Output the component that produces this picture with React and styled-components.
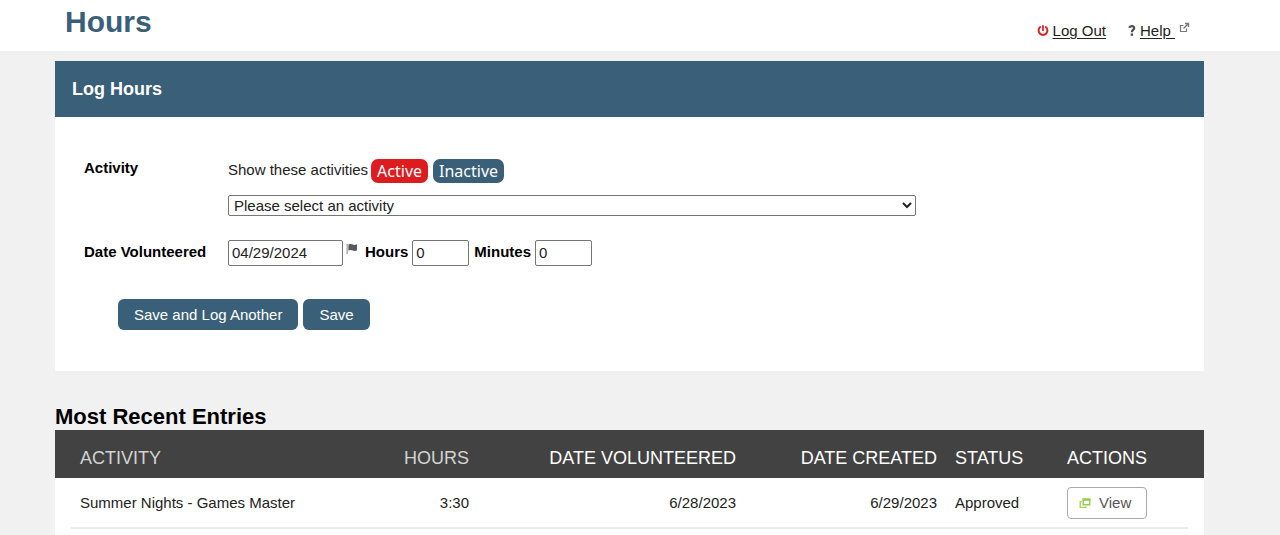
import React, { useState } from "react";
import styled, { createGlobalStyle } from "styled-components";

const entries = [
  {
    activity: "Summer Nights - Games Master",
    hours: "3:30",
    volunteered: "6/28/2023",
    created: "6/29/2023",
    status: "Approved",
  },
];

const PowerIcon = () => (
  <svg width="12" height="12" viewBox="0 0 12 12" fill="none" aria-hidden="true">
    <path
      d="M3.2 2.1A4.4 4.4 0 1 0 8.8 2.1"
      stroke="#dd2222"
      strokeWidth="2"
      strokeLinecap="round"
    />
    <path d="M6 0.9v4.4" stroke="#dd2222" strokeWidth="1.8" strokeLinecap="round" />
  </svg>
);

const QuestionIcon = () => (
  <svg width="8" height="12" viewBox="0 0 8 12" fill="none" aria-hidden="true">
    <path
      d="M1.2 2.8C1.8 0.5 6.4 0.5 6.2 3.1C6 4.9 3.9 4.9 3.9 7.2"
      stroke="#4d4d55"
      strokeWidth="2.2"
    />
    <rect x="2.7" y="8.4" width="2.4" height="2.4" fill="#4d4d55" />
  </svg>
);

const ExternalIcon = () => (
  <svg width="11" height="11" viewBox="0 0 11 11" fill="none" aria-hidden="true">
    <path d="M4.5 3.5H1.5V9.5H7.5V6.5" stroke="#77777c" strokeWidth="1.2" />
    <path d="M6 1.5H9.5V5M9.4 1.6L4.5 6.5" stroke="#77777c" strokeWidth="1.4" />
  </svg>
);

const FlagIcon = () => (
  <svg width="12" height="12" viewBox="0 0 12 12" aria-hidden="true">
    <path d="M0.5 0H1.8V10H0.5Z" fill="#a4a4a8" />
    <path
      d="M2.4 0.6C4.2 -0.4 5.6 0 6.8 0.6C8.2 1.3 9.6 1 11 0.3V6.2C9.6 7 8.2 7.2 6.8 6.5C5.6 5.9 4.2 5.7 2.4 6.6Z"
      fill="#58585e"
    />
  </svg>
);

const WindowsIcon = () => (
  <svg width="12" height="12" viewBox="0 0 12 12" fill="none" aria-hidden="true">
    <path d="M3 4.6H1.2V10.4H7V9.2" stroke="#a2d45e" strokeWidth="1.3" />
    <path d="M4.2 2.2H10.7V7.8H4.2Z" stroke="#95cc4b" strokeWidth="1.4" />
    <path d="M3.5 1.5H11.4V3.8H3.5Z" fill="#95cc4b" />
  </svg>
);

export default function App() {
  const [filter, setFilter] = useState("active");
  const [date, setDate] = useState("04/29/2024");
  const [hours, setHours] = useState("0");
  const [minutes, setMinutes] = useState("0");

  return (
    <>
      <GlobalStyle />
      <Header>
        <PageTitle>Hours</PageTitle>
        <HeaderLinks>
          <HeaderItem>
            <PowerIcon />
            <HeaderLink href="#logout">Log Out</HeaderLink>
          </HeaderItem>
          <HeaderItem>
            <QuestionIcon />
            <HeaderLink href="#help">Help&nbsp;</HeaderLink>
            <RaisedIcon>
              <ExternalIcon />
            </RaisedIcon>
          </HeaderItem>
        </HeaderLinks>
      </Header>

      <Main>
        <Panel>
          <PanelHeading>Log Hours</PanelHeading>
          <Form onSubmit={(e) => e.preventDefault()}>
            <FormRow>
              <FieldLabel htmlFor="activity">Activity</FieldLabel>
              <ActivityFields>
                <FilterRow>
                  <FilterText>Show these activities</FilterText>
                  <FilterButton
                    type="button"
                    $selected={filter === "active"}
                    onClick={() => setFilter("active")}
                  >
                    Active
                  </FilterButton>
                  <FilterButton
                    type="button"
                    $selected={filter === "inactive"}
                    onClick={() => setFilter("inactive")}
                  >
                    Inactive
                  </FilterButton>
                </FilterRow>
                <ActivitySelect id="activity">
                  <option>Please select an activity</option>
                </ActivitySelect>
              </ActivityFields>
            </FormRow>

            <FormRow>
              <FieldLabel $tall htmlFor="date">
                Date Volunteered
              </FieldLabel>
              <TimeFields>
                <DateField>
                  <TextInput
                    id="date"
                    $width={115}
                    value={date}
                    onChange={(e) => setDate(e.target.value)}
                  />
                  <FlagIcon />
                </DateField>
                <InlineField>
                  <FieldLabel $tall htmlFor="hours">
                    Hours
                  </FieldLabel>
                  <TextInput
                    id="hours"
                    $width={57}
                    value={hours}
                    onChange={(e) => setHours(e.target.value)}
                  />
                </InlineField>
                <InlineField>
                  <FieldLabel $tall htmlFor="minutes">
                    Minutes
                  </FieldLabel>
                  <TextInput
                    id="minutes"
                    $width={57}
                    value={minutes}
                    onChange={(e) => setMinutes(e.target.value)}
                  />
                </InlineField>
              </TimeFields>
            </FormRow>

            <ButtonRow>
              <SaveButton type="submit">Save and Log Another</SaveButton>
              <SaveButton type="submit">Save</SaveButton>
            </ButtonRow>
          </Form>
        </Panel>

        <SectionTitle>Most Recent Entries</SectionTitle>
        <TablePanel>
          <Table>
            <colgroup>
              <col />
              <Col $width={94} />
              <Col $width={267} />
              <Col $width={201} />
              <Col $width={112} />
              <Col $width={130} />
            </colgroup>
            <TableHead>
              <tr>
                <HeadCell $muted>ACTIVITY</HeadCell>
                <HeadCell $muted $right>
                  HOURS
                </HeadCell>
                <HeadCell $right>DATE VOLUNTEERED</HeadCell>
                <HeadCell $right>DATE CREATED</HeadCell>
                <HeadCell>STATUS</HeadCell>
                <HeadCell>ACTIONS</HeadCell>
              </tr>
            </TableHead>
            <tbody>
              {entries.map((entry) => (
                <tr key={entry.activity}>
                  <Cell>{entry.activity}</Cell>
                  <Cell $right>{entry.hours}</Cell>
                  <Cell $right>{entry.volunteered}</Cell>
                  <Cell $right>{entry.created}</Cell>
                  <Cell>{entry.status}</Cell>
                  <Cell>
                    <ViewButton type="button">
                      <WindowsIcon />
                      View
                    </ViewButton>
                  </Cell>
                </tr>
              ))}
            </tbody>
          </Table>
        </TablePanel>
      </Main>
    </>
  );
}

const GlobalStyle = createGlobalStyle`
  * {
    box-sizing: border-box;
  }

  body {
    margin: 0;
    background: #f1f1f1;
    color: #222;
    font-family: "Liberation Sans", Arial, sans-serif;
    font-size: 15px;
    line-height: 18px;
  }
`;

const Header = styled.header`
  display: flex;
  justify-content: space-between;
  align-items: flex-start;
  padding: 4px 90px 11px 65px;
  background: #fff;
`;

const PageTitle = styled.h1`
  margin: 0;
  color: #3a5f78;
  font-size: 30px;
  line-height: 36px;
`;

const HeaderLinks = styled.nav`
  display: flex;
  gap: 22px;
  padding-top: 18px;
`;

const HeaderItem = styled.div`
  display: flex;
  align-items: center;
  gap: 4px;
`;

const HeaderLink = styled.a`
  color: #222;
  text-underline-offset: 2px;
`;

const RaisedIcon = styled.span`
  display: flex;
  padding-bottom: 7px;
`;

const Main = styled.main`
  padding: 10px 76px 0 55px;
`;

const Panel = styled.section`
  background: #fff;
`;

const PanelHeading = styled.h2`
  margin: 0;
  padding: 16px 17px;
  background: #3a5f78;
  color: #fff;
  font-size: 18px;
  line-height: 24px;
`;

const Form = styled.form`
  padding: 42px 29px 41px;
`;

const FormRow = styled.div`
  display: grid;
  grid-template-columns: 144px 1fr;
  align-items: start;
  margin-bottom: 24px;
`;

const FieldLabel = styled.label`
  color: #000;
  font-weight: 700;
  line-height: ${({ $tall }) => ($tall ? 24 : 18)}px;
`;

const ActivityFields = styled.div`
  display: flex;
  flex-direction: column;
  gap: 12px;
`;

const FilterRow = styled.div`
  display: flex;
  align-items: center;
  gap: 5px;
`;

const FilterText = styled.span`
  margin-right: -2px;
  padding-bottom: 2px;
`;

const FilterButton = styled.button`
  height: 24px;
  padding: 0 6px;
  border: 0;
  border-radius: 7px;
  background: ${({ $selected }) => ($selected ? "#dd1c1f" : "#3a5f78")};
  color: #fff;
  font-family: "Noto Sans", sans-serif;
  font-size: 16px;
  line-height: 24px;
  cursor: pointer;
`;

const ActivitySelect = styled.select`
  width: 100%;
  max-width: 688px;
  height: 21px;
  padding: 0 1px;
  border: 1px solid #767676;
  border-radius: 2px;
  background: #fff;
  color: #222;
  font-family: inherit;
  font-size: 15px;
`;

const TimeFields = styled.div`
  display: flex;
  align-items: flex-start;
  gap: 5px;
`;

const DateField = styled.div`
  display: flex;
  align-items: flex-start;
  gap: 3px;
  padding-right: 2px;

  svg {
    margin-top: 4px;
  }
`;

const InlineField = styled.div`
  display: flex;
  align-items: flex-start;
  gap: 4px;
`;

const TextInput = styled.input`
  width: ${({ $width }) => $width}px;
  height: 26px;
  padding: 0 3px 2px;
  border: 1px solid #767676;
  border-radius: 2px;
  color: #222;
  font-family: inherit;
  font-size: 15px;
`;

const ButtonRow = styled.div`
  display: flex;
  gap: 5px;
  padding: 9px 34px 0;
`;

const SaveButton = styled.button`
  height: 31px;
  padding: 0 16px;
  border: 0;
  border-radius: 6px;
  background: #3a5f78;
  color: #fff;
  font-family: inherit;
  font-size: 15px;
  cursor: pointer;
`;

const SectionTitle = styled.h2`
  margin: 33px 0 0;
  color: #000;
  font-size: 22px;
  line-height: 26px;
`;

const TablePanel = styled.section`
  padding: 0 16px 24px;
  background: #fff;
`;

const Table = styled.table`
  width: 100%;
  table-layout: fixed;
  border-spacing: 0;
`;

const Col = styled.col`
  width: ${({ $width }) => $width}px;
`;

const TableHead = styled.thead`
  background: #424242;
  box-shadow: -16px 0 #424242, 16px 0 #424242;
`;

const HeadCell = styled.th`
  height: 48px;
  padding: 7px 9px 0;
  color: ${({ $muted }) => ($muted ? "#d3d3d3" : "#fff")};
  font-size: 18px;
  font-weight: 400;
  text-align: ${({ $right }) => ($right ? "right" : "left")};
`;

const Cell = styled.td`
  height: 51px;
  padding: 0 9px;
  border-bottom: 2px solid #ebebeb;
  text-align: ${({ $right }) => ($right ? "right" : "left")};
`;

const ViewButton = styled.button`
  display: flex;
  align-items: center;
  gap: 8px;
  height: 32px;
  padding: 0 15px 0 11px;
  border: 1px solid #aaa;
  border-radius: 4px;
  background: #fff;
  color: #555;
  font-family: inherit;
  font-size: 15px;
  cursor: pointer;
`;
